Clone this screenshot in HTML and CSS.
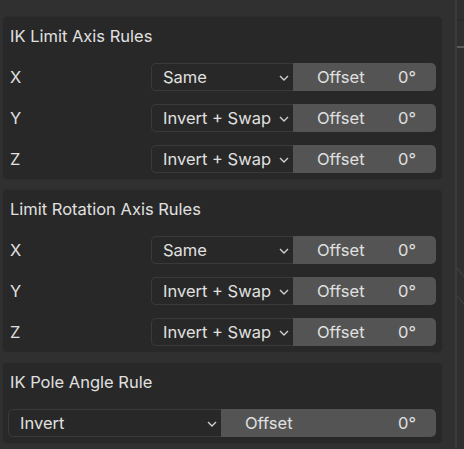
FILE: index.html
```html
<!DOCTYPE html>
<html>
<head>
<meta charset="utf-8">
<link rel="stylesheet" href="styles.css">
</head>
<body>
<div class="app">
  <div class="main">
    <section class="panel">
      <div class="panel-head">IK Limit Axis Rules</div>
      <div class="rows">
        <div class="row">
          <span class="label">X</span>
          <div class="select"><span>Same</span><svg class="chev" width="10" height="6" viewBox="0 0 10 6"><polyline points="1,1 5,5 9,1"/></svg></div>
          <div class="num"><span>Offset</span><span>0°</span></div>
        </div>
        <div class="row">
          <span class="label">Y</span>
          <div class="select"><span>Invert + Swap</span><svg class="chev" width="10" height="6" viewBox="0 0 10 6"><polyline points="1,1 5,5 9,1"/></svg></div>
          <div class="num"><span>Offset</span><span>0°</span></div>
        </div>
        <div class="row">
          <span class="label">Z</span>
          <div class="select"><span>Invert + Swap</span><svg class="chev" width="10" height="6" viewBox="0 0 10 6"><polyline points="1,1 5,5 9,1"/></svg></div>
          <div class="num"><span>Offset</span><span>0°</span></div>
        </div>
      </div>
    </section>
    <section class="panel">
      <div class="panel-head">Limit Rotation Axis Rules</div>
      <div class="rows">
        <div class="row">
          <span class="label">X</span>
          <div class="select"><span>Same</span><svg class="chev" width="10" height="6" viewBox="0 0 10 6"><polyline points="1,1 5,5 9,1"/></svg></div>
          <div class="num"><span>Offset</span><span>0°</span></div>
        </div>
        <div class="row">
          <span class="label">Y</span>
          <div class="select"><span>Invert + Swap</span><svg class="chev" width="10" height="6" viewBox="0 0 10 6"><polyline points="1,1 5,5 9,1"/></svg></div>
          <div class="num"><span>Offset</span><span>0°</span></div>
        </div>
        <div class="row">
          <span class="label">Z</span>
          <div class="select"><span>Invert + Swap</span><svg class="chev" width="10" height="6" viewBox="0 0 10 6"><polyline points="1,1 5,5 9,1"/></svg></div>
          <div class="num"><span>Offset</span><span>0°</span></div>
        </div>
      </div>
    </section>
    <section class="panel">
      <div class="panel-head">IK Pole Angle Rule</div>
      <div class="rows">
        <div class="row wide">
          <div class="select"><span>Invert</span><svg class="chev" width="10" height="6" viewBox="0 0 10 6"><polyline points="1,1 5,5 9,1"/></svg></div>
          <div class="num"><span>Offset</span><span>0°</span></div>
        </div>
      </div>
    </section>
  </div>
  <div class="side">
    <svg class="side-art" width="8" height="449" viewBox="0 0 8 449">
      <line x1="0" y1="47" x2="8" y2="47" stroke="#6a6a6a" stroke-width="1.5"/>
      <line x1="0" y1="20" x2="8" y2="20" stroke="#262626" stroke-width="1"/>
      <line x1="0" y1="268" x2="8" y2="278" stroke="#454545" stroke-width="1"/>
      <line x1="0" y1="296" x2="8" y2="305" stroke="#454545" stroke-width="1"/>
    </svg>
  </div>
</div>
</body>
</html>
```

FILE: styles.css
```css
* { box-sizing: border-box; }
html, body {
  margin: 0;
  padding: 0;
  background: #303030;
  width: 464px;
  height: 449px;
  overflow: hidden;
}
body {
  font-family: Inter, "Noto Sans", sans-serif;
  font-size: 16.5px;
  color: #e0e0e0;
}
.app {
  display: flex;
  height: 449px;
}
.main {
  width: 455px;
  padding: 16px 12px 0 2px;
  display: flex;
  flex-direction: column;
  gap: 9px;
}
.side {
  width: 9px;
  border-left: 2px solid #3b3b3b;
  background: #2f2f2f;
}
.side-art { display: block; }
.panel {
  background: #282828;
  border: 1px solid #2e2e2e;
  border-radius: 5px;
  padding: 0 6px 6px 5px;
}
.panel-head {
  height: 39px;
  display: flex;
  align-items: center;
  padding-left: 2px;
  padding-bottom: 1px;
}
.rows {
  display: flex;
  flex-direction: column;
  gap: 13px;
  padding-top: 7px;
}
.row {
  display: grid;
  grid-template-columns: 143px 142px 143px;
  height: 28px;
  align-items: stretch;
}
.row.wide {
  grid-template-columns: 213px 215px;
}
.label {
  display: flex;
  align-items: center;
  padding-left: 2px;
}
.select {
  display: flex;
  align-items: center;
  justify-content: space-between;
  background: #282828;
  border: 1px solid #3a3a3a;
  border-right: none;
  border-radius: 5px 0 0 5px;
  padding: 0 4px 0 11px;
}
.chev {
  fill: none;
  stroke: #cfcfcf;
  stroke-width: 1.4;
  margin-top: 2px;
}
.num {
  display: flex;
  align-items: center;
  justify-content: space-between;
  background: #545454;
  border-radius: 0 5px 5px 0;
  padding: 0 20px 0 24px;
}
```
